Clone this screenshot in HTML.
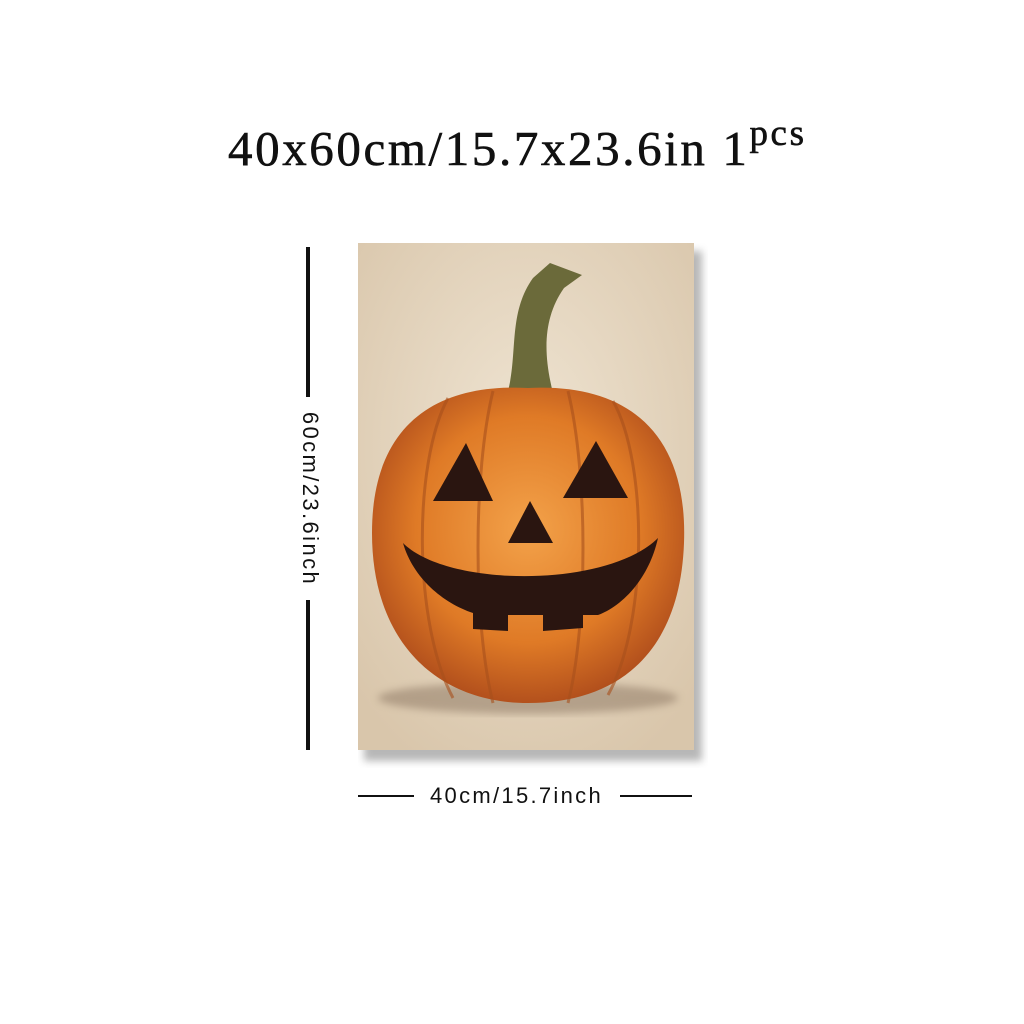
<!DOCTYPE html>
<html><head><style>
body{margin:0;width:1024px;height:1024px;background:#fff;position:relative;overflow:hidden;font-family:"Liberation Sans",sans-serif}
.t{position:absolute;left:228px;top:120px;font-family:"Liberation Serif",serif;font-size:49px;color:#111;white-space:nowrap;letter-spacing:2.6px;-webkit-text-stroke:0.6px #111}
.t sup{font-size:37px;position:relative;top:-8px;vertical-align:top}
.l{position:absolute;background:#111}
.vt{position:absolute;left:310px;top:499px;transform:translate(-50%,-50%) rotate(90deg);font-size:22px;letter-spacing:2.4px;color:#111;white-space:nowrap}
.bt{position:absolute;left:430px;top:783px;font-size:22px;letter-spacing:2.3px;color:#111}
</style></head><body>
<div class="t">40x60cm/15.7x23.6in 1<sup>pcs</sup></div>
<div class="l" style="left:306px;top:247px;width:4px;height:150px"></div>
<div class="l" style="left:306px;top:600px;width:4px;height:150px"></div>
<div class="vt">60cm/23.6inch</div>
<div class="l" style="left:358px;top:795px;width:56px;height:2px"></div>
<div class="l" style="left:620px;top:795px;width:72px;height:2px"></div>
<div class="bt">40cm/15.7inch</div>
<svg style="position:absolute;left:358px;top:243px" width="350" height="525" viewBox="0 0 350 525">
<defs>
<radialGradient id="bg" cx="50%" cy="40%" r="70%"><stop offset="0" stop-color="#efe4d2"/><stop offset="1" stop-color="#d9c6ab"/></radialGradient>
<radialGradient id="pk" cx="50%" cy="45%" r="60%"><stop offset="0" stop-color="#f3a24a"/><stop offset="0.6" stop-color="#df7a26"/><stop offset="1" stop-color="#a8461a"/></radialGradient>
<filter id="s"><feGaussianBlur stdDeviation="4"/></filter>
</defs>
<rect x="6" y="8" width="338" height="510" fill="#999" filter="url(#s)" opacity=".7"/>
<rect x="0" y="0" width="336" height="507" fill="url(#bg)"/>
<ellipse cx="170" cy="455" rx="150" ry="16" fill="#8a7560" opacity=".5" filter="url(#s)"/>
<path d="M150 148 C160 110 150 70 175 35 L192 20 L224 32 L206 45 C185 75 185 110 195 150 Z" fill="#6b6a3a"/>
<path d="M14 290 C14 180 80 140 170 145 C270 140 330 190 326 300 C322 410 260 460 170 460 C80 460 14 400 14 290Z" fill="url(#pk)"/>
<g fill="none" stroke="#a8501c" stroke-width="3" opacity=".6">
<path d="M90 155 C55 220 55 380 95 455"/><path d="M135 148 C115 230 115 380 135 460"/>
<path d="M210 148 C230 230 230 380 210 460"/><path d="M255 158 C290 220 290 380 250 452"/>
</g>
<path d="M75 258 L108 200 L135 258Z" fill="#2a1510"/>
<path d="M205 255 L238 198 L270 255Z" fill="#2a1510"/>
<path d="M150 300 L172 258 L195 300Z" fill="#2a1510"/>
<path d="M45 300 C90 345 250 345 300 295 C290 340 260 365 240 372 L225 372 L225 385 L185 388 L185 372 L150 372 L150 388 L115 386 L115 370 C85 360 55 335 45 300Z" fill="#2a1510"/>
</svg>
</body></html>
